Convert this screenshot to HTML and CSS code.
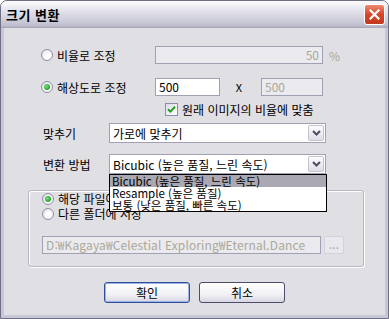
FILE: index.html
```html
<!DOCTYPE html>
<html lang="ko">
<head>
  <meta charset="UTF-8" />
  <title>크기 변환</title>
  <link rel="stylesheet" href="styles.css">
</head>
<body>
  <div class="window">
    <div class="titlebar">
      <span class="title">크기 변환</span>
      <span class="close">
        <svg width="11" height="11" viewBox="0 0 11 11"><path d="M1.5 1.5 L9.5 9.5 M9.5 1.5 L1.5 9.5" stroke="#fff" stroke-width="2.2" stroke-linecap="square"/></svg>
      </span>
    </div>

    <div class="content">
      <div class="row row-ratio">
        <label class="opt"><span class="radio"></span>비율로 조정</label>
        <div class="field disabled pct">50</div>
        <span class="unit">%</span>
      </div>

      <div class="row row-size">
        <label class="opt"><span class="radio on"></span>해상도로 조정</label>
        <div class="field w500">500</div>
        <span class="times">X</span>
        <div class="field disabled h500">500</div>
      </div>

      <div class="row row-keep">
        <label class="chk"><span class="checkbox">
          <svg width="9" height="9" viewBox="0 0 9 9"><path d="M1 4.2 L3.4 6.6 L8 1.8" fill="none" stroke="#21a121" stroke-width="2"/></svg>
        </span>원래 이미지의 비율에 맞춤</label>
      </div>

      <div class="row row-select">
        <span class="label">맞추기</span>
        <div class="combo">
          <span class="combo-text">가로에 맞추기</span>
          <span class="combo-btn"><svg width="9" height="6" viewBox="0 0 9 6"><path d="M1 1 L4.5 4.5 L8 1" fill="none" stroke="#4d4d5e" stroke-width="2"/></svg></span>
        </div>
      </div>

      <div class="row row-select row-method">
        <span class="label">변환 방법</span>
        <div class="combo">
          <span class="combo-text">Bicubic (높은 품질, 느린 속도)</span>
          <span class="combo-btn"><svg width="9" height="6" viewBox="0 0 9 6"><path d="M1 1 L4.5 4.5 L8 1" fill="none" stroke="#4d4d5e" stroke-width="2"/></svg></span>
          <ul class="combo-list">
            <li class="sel">Bicubic (높은 품질, 느린 속도)</li>
            <li>Resample (높은 품질)</li>
            <li>보통 (낮은 품질, 빠른 속도)</li>
          </ul>
        </div>
      </div>

      <div class="group">
        <label class="opt"><span class="radio on"></span>해당 파일에 저장</label>
        <label class="opt"><span class="radio"></span>다른 폴더에 저장</label>
        <div class="path-row">
          <div class="field disabled path">D:₩Kagaya₩Celestial Exploring₩Eternal.Dance</div>
          <span class="browse">...</span>
        </div>
      </div>

      <div class="buttons">
        <span class="btn default">확인</span>
        <span class="btn">취소</span>
      </div>
    </div>
  </div>
</body>
</html>
```

FILE: styles.css
```css
body {
  margin: 0;
  background: #ffffff;
  font-family: "Noto Sans CJK KR", "Liberation Sans", sans-serif;
  font-size: 12px;
  color: #000;
}

.window {
  width: 389px;
  height: 319px;
  box-sizing: border-box;
  border: 1px solid #6e6e85;
  border-radius: 7px 7px 0 0;
  background: #e0dfe3;
  box-shadow: inset 3px 0 #c8c7d8, inset -3px 0 #c8c7d8, inset 0 -3px #c8c7d8;
  overflow: hidden;
}

.titlebar {
  height: 27px;
  display: flex;
  align-items: center;
  justify-content: space-between;
  padding: 0 3px 0 5px;
  background: linear-gradient(#fdfdfe, #ebebf2 25%, #d6d5e1 60%, #c3c2d2 90%, #b4b3c5);
  border-bottom: 1px solid #a8a7bb;
  box-sizing: border-box;
}

.title {
  font-weight: bold;
  font-size: 13px;
  letter-spacing: 0.5px;
}

.close {
  width: 21px;
  height: 21px;
  box-sizing: border-box;
  border: 1px solid #fff;
  border-radius: 3px;
  background: linear-gradient(#ee8a73, #d7452b 50%, #c3381f);
  display: flex;
  align-items: center;
  justify-content: center;
  margin-top: 1px;
}

.content {
  padding: 18px 0 0 40px;
}

.row {
  display: flex;
  align-items: center;
}

.opt,
.chk {
  display: flex;
  align-items: center;
  white-space: nowrap;
}

.radio {
  width: 12px;
  height: 12px;
  box-sizing: border-box;
  border-radius: 50%;
  border: 1px solid #8f8ea8;
  background: radial-gradient(circle at 60% 60%, #fff 30%, #dcdbe6 90%);
  margin-right: 4px;
  position: relative;
}

.radio.on::after {
  content: "";
  position: absolute;
  left: 2px;
  top: 2px;
  width: 6px;
  height: 6px;
  border-radius: 50%;
  background: radial-gradient(circle at 40% 40%, #7ee07e, #21a121 70%);
}

.field {
  height: 18px;
  box-sizing: border-box;
  border: 1px solid #a1a0b4;
  background: #fff;
  padding: 0 3px;
  line-height: 16px;
}

.field.disabled {
  background: #ebeaef;
  color: #aca899;
}

.row-ratio {
  height: 18px;
}

.row-ratio .opt {
  width: 114px;
}

.pct {
  width: 168px;
  text-align: right;
}

.unit {
  color: #aca899;
  margin-left: 6px;
}

.row-size {
  height: 18px;
  margin-top: 14px;
}

.row-size .opt {
  width: 114px;
}

.w500 {
  width: 65px;
}

.times {
  width: 38px;
  text-align: center;
  font-size: 11px;
  padding-right: 3px;
}

.h500 {
  width: 62px;
}

.row-keep {
  margin-top: 6px;
  padding-left: 124px;
  height: 15px;
}

.checkbox {
  width: 13px;
  height: 13px;
  box-sizing: border-box;
  border: 1px solid #8f8ea8;
  background: linear-gradient(135deg, #dcdbe6, #fff);
  display: flex;
  align-items: center;
  justify-content: center;
  margin-right: 4px;
}

.row-select {
  margin-top: 6px;
  height: 20px;
}

.row-method {
  margin-top: 11px;
}

.label {
  width: 66px;
  padding-left: 2px;
}

.combo {
  position: relative;
  width: 217px;
  height: 20px;
  box-sizing: border-box;
  border: 1px solid #a1a0b4;
  background: #fff;
  display: flex;
  align-items: center;
  justify-content: space-between;
  padding: 0 1px 0 3px;
}

.combo-btn {
  width: 16px;
  height: 16px;
  box-sizing: border-box;
  border: 1px solid #c3c3d3;
  border-radius: 2px;
  background: linear-gradient(#fdfdfe, #dddde8);
  display: flex;
  align-items: center;
  justify-content: center;
}

.combo-list {
  position: absolute;
  left: -1px;
  top: 19px;
  width: 216px;
  margin: 0;
  padding: 0;
  list-style: none;
  background: #fff;
  border: 1px solid #000;
  z-index: 5;
}

.combo-list li {
  height: 12px;
  line-height: 12px;
  font-size: 11.5px;
  padding: 0 2px;
  white-space: nowrap;
}

.combo-list li.sel {
  background: #a9a8b3;
}

.group {
  margin: 16px 0 0 -13px;
  width: 336px;
  height: 77px;
  box-sizing: border-box;
  border: 1px solid #b8b7c6;
  border-radius: 3px;
  box-shadow: inset 1px 1px #fff, 1px 1px #fff;
  padding: 0 0 0 13px;
}

.group .opt {
  height: 15px;
}

.path-row {
  display: flex;
  align-items: center;
  margin-top: 15px;
}

.path {
  width: 279px;
  height: 18px;
  white-space: nowrap;
  overflow: hidden;
  letter-spacing: 0.12px;
}

.browse {
  width: 20px;
  height: 18px;
  box-sizing: border-box;
  margin-left: 3px;
  border: 1px solid #d2d1dc;
  border-radius: 2px;
  background: #e9e8ee;
  color: #aca899;
  text-align: center;
  line-height: 14px;
}

.buttons {
  display: flex;
  gap: 9px;
  margin: 15px 0 0 63px;
}

.btn {
  width: 86px;
  height: 21px;
  box-sizing: border-box;
  border: 1px solid #4c4c6b;
  border-radius: 3px;
  background: linear-gradient(#ffffff, #f2f2f6 60%, #d7d6e2);
  display: flex;
  align-items: center;
  justify-content: center;
}

.btn.default {
  border-color: #2f4f9c;
  box-shadow: inset 0 0 0 1px #9bb4e7;
}
```
